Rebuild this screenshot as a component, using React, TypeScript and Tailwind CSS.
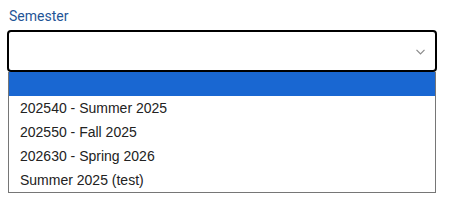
import React from "react";

export default function App() {
  const options = [
    "202540 - Summer 2025",
    "202550 - Fall 2025",
    "202630 - Spring 2026",
    "Summer 2025 (test)",
  ];
  return (
    <div className="w-[449px] h-[208px] bg-white pl-[7px] pt-[6px]">
      <label className="block pl-[2px] text-[14px] leading-[20px] text-[#1f5597] font-['Roboto',sans-serif]">
        Semester
      </label>
      <div className="mt-[4px] w-[430px] h-[42px] border-2 border-black rounded-[4px] flex items-center justify-end pr-[10px]">
        <svg width="9" height="6" viewBox="0 0 9 6" className="mt-[2px]">
          <path d="M0.5 0.8 L4.5 4.8 L8.5 0.8" fill="none" stroke="#8a8a8a" strokeWidth="1.2" />
        </svg>
      </div>
      <div className="ml-[1px] w-[428px] border border-t-0 border-[#767676] font-['Liberation_Sans',Arial,sans-serif] text-[14px] leading-[24px] text-[#222222]">
        <div className="h-[24px] bg-[#1967d2]"></div>
        {options.map((o) => (
          <div key={o} className="h-[24px] pl-[11px]">
            {o}
          </div>
        ))}
      </div>
    </div>
  );
}
